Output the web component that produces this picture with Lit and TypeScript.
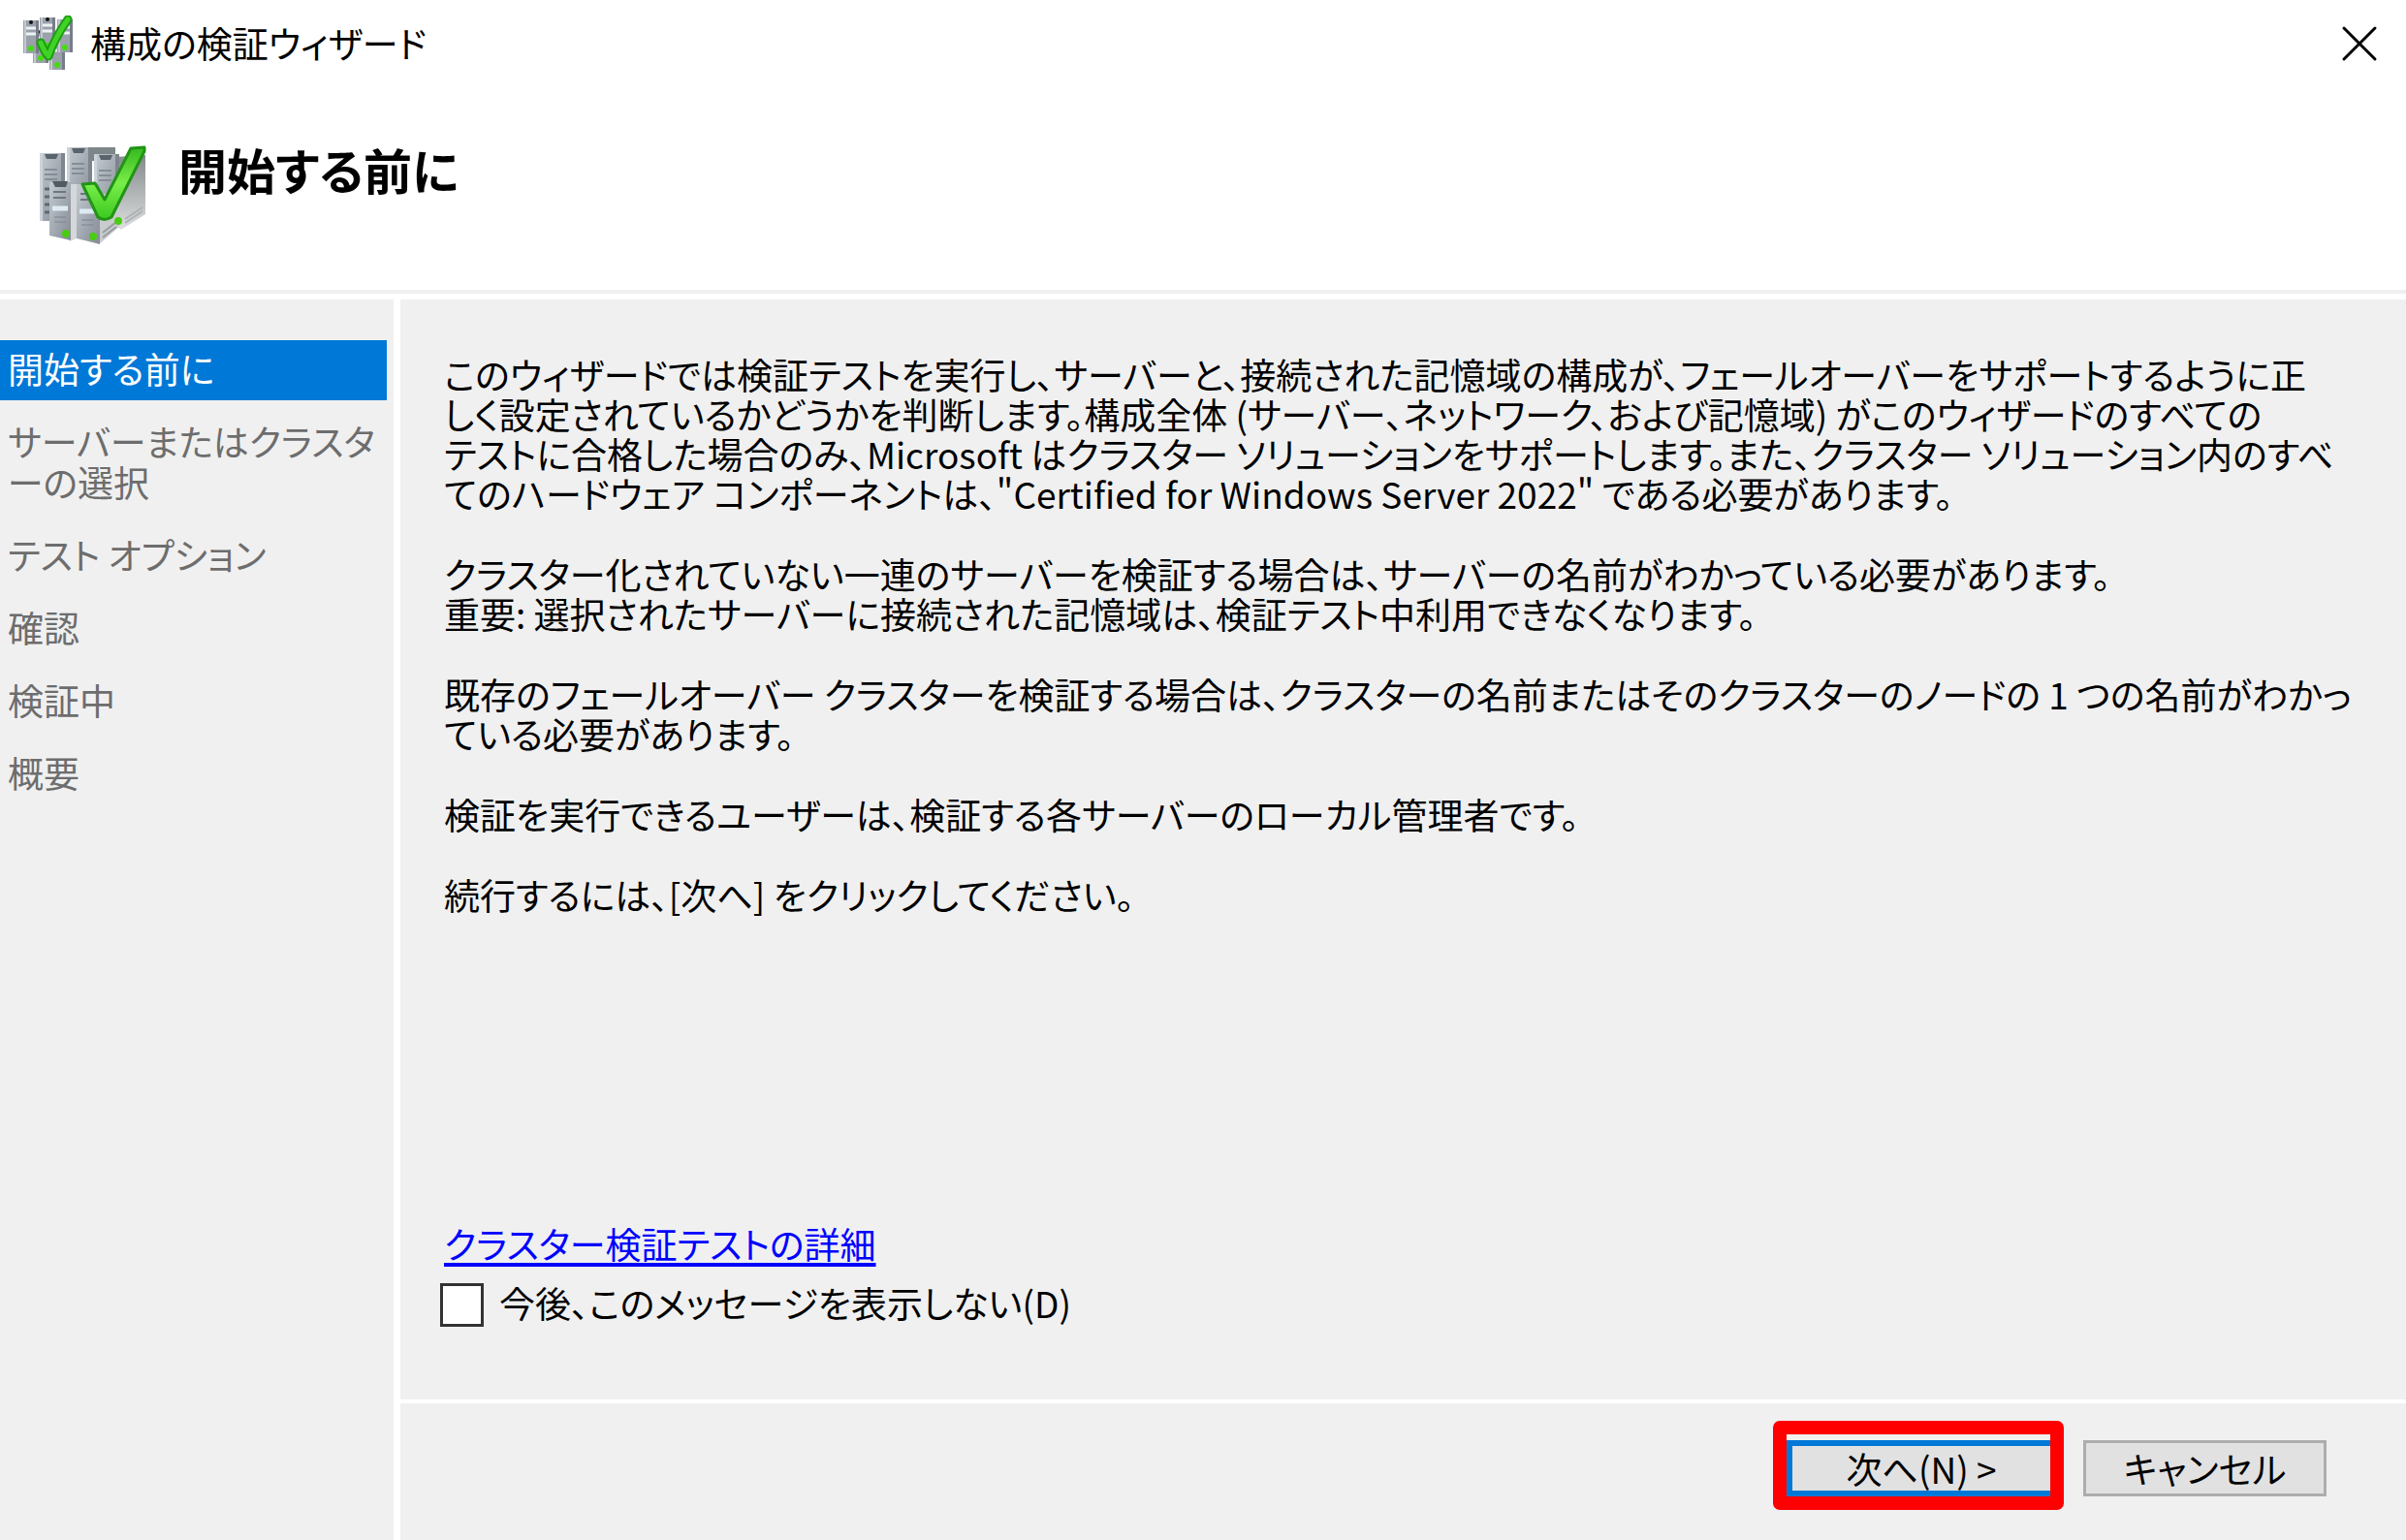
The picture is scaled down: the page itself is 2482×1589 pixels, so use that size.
import { LitElement, html, css, svg } from "lit";
import { customElement, state } from "lit/decorators.js";

interface Step {
  label: string;
}

const STEPS: Step[] = [
  { label: "開始する前に" },
  { label: "サーバーまたはクラスタ\nーの選択" },
  { label: "テスト オプション" },
  { label: "確認" },
  { label: "検証中" },
  { label: "概要" },
];

const PARAGRAPHS: string[] = [
  "このウィザードでは検証テストを実行し、サーバーと、接続された記憶域の構成が、フェールオーバーをサポートするように正\n" +
    "しく設定されているかどうかを判断します。構成全体 (サーバー、ネットワーク、および記憶域) がこのウィザードのすべての\n" +
    "テストに合格した場合のみ、Microsoft はクラスター ソリューションをサポートします。また、クラスター ソリューション内のすべ\n" +
    'てのハードウェア コンポーネントは、"Certified for Windows Server 2022" である必要があります。',
  "クラスター化されていない一連のサーバーを検証する場合は、サーバーの名前がわかっている必要があります。\n" +
    "重要: 選択されたサーバーに接続された記憶域は、検証テスト中利用できなくなります。",
  "既存のフェールオーバー クラスターを検証する場合は、クラスターの名前またはそのクラスターのノードの 1 つの名前がわかっ\n" +
    "ている必要があります。",
  "検証を実行できるユーザーは、検証する各サーバーのローカル管理者です。",
  "続行するには、[次へ] をクリックしてください。",
];

const tower = (x: number, y: number, h: number) => svg`
  <rect x=${x} y=${y} width="26" height=${h} rx="1" fill="url(#face)" />
  <rect x=${x} y=${y} width="3" height=${h} fill="#ccd3d9" />
  <rect x=${x + 22} y=${y} width="4" height=${h} fill="#7e858d" />
  <path d="M${x + 5} ${y + 1}h14l-2 5h-10z" fill="#59636b" />
  <path d="M${x + 5} ${y + 17}h13M${x + 5} ${y + 22}h13M${x + 5} ${y + 27}h13" stroke="#858d97" stroke-width="2" />
`;

@customElement("server-icon")
export class ServerIcon extends LitElement {
  static styles = css`
    :host {
      display: block;
    }
    svg {
      display: block;
      width: 100%;
      height: 100%;
    }
  `;

  render() {
    return html`
      <svg viewBox="0 0 112 104" aria-hidden="true">
        <defs>
          <linearGradient id="face" x1="0" y1="0" x2="1" y2="1">
            <stop offset="0" stop-color="#c4ccd2" />
            <stop offset="0.45" stop-color="#a6adb5" />
            <stop offset="1" stop-color="#858994" />
          </linearGradient>
          <linearGradient id="side" x1="0" y1="0" x2="0" y2="1">
            <stop offset="0" stop-color="#858a8c" />
            <stop offset="1" stop-color="#dcdedf" />
          </linearGradient>
          <linearGradient id="tick" x1="0" y1="0" x2="0" y2="1">
            <stop offset="0" stop-color="#35b81f" />
            <stop offset="0.5" stop-color="#79ee49" />
            <stop offset="1" stop-color="#3bc91f" />
          </linearGradient>
        </defs>
        <path d="M54 2h25v14h-25z" fill="#7d8688" />
        <path d="M79 12l31-2v61l-25 16-6-4z" fill="url(#side)" />
        <path d="M89 76l18-12M89 80l18-12" stroke="#aeb1b4" stroke-width="2" />
        ${tower(1, 8, 70)}
        <path d="M6 45h5M6 53h5M6 61h5M6 69h5" stroke="#5f6870" stroke-width="3" />
        ${tower(29, 2, 64)}
        ${tower(57, 9, 70)}
        <path d="M62 50l21 0v34l-21 18z" fill="#c9ccce" />
        <path d="M66 90l14-11M66 95l14-11" stroke="#989ca0" stroke-width="2" />
        <path d="M32 40h7v56l-7 3z" fill="#d5d8da" />
        <path d="M11 38h22v60l-22-5z" fill="url(#face)" />
        <path d="M14 37h16l-2 6h-11z" fill="#505a61" />
        <path d="M15 48h13M15 54h13" stroke="#6e7781" stroke-width="2" />
        <path d="M14 65h16" stroke="#dfebf2" stroke-width="5" />
        <path d="M16 74h12M16 79h12" stroke="#7c8490" stroke-width="1" />
        <path d="M39 40h24v62l-24-6z" fill="url(#face)" />
        <path d="M43 50h15M43 56h15" stroke="#6e7781" stroke-width="2" />
        <path d="M42 68h17" stroke="#dfebf2" stroke-width="5" />
        <path d="M44 77h13M44 82h13" stroke="#7c8490" stroke-width="1" />
        <circle cx="28" cy="91" r="4" fill="#48cd10" />
        <circle cx="56" cy="94" r="4" fill="#48cd10" />
        <circle cx="82" cy="78" r="4" fill="#48cd10" />
        <path
          d="M45 40l13-1 10 17 27-53 14-1v4l-34 68q-8 5-14 0z"
          fill="url(#tick)"
          stroke="#219416"
          stroke-width="3"
          stroke-linejoin="round"
        />
      </svg>
    `;
  }
}

@customElement("server-icon-small")
export class ServerIconSmall extends LitElement {
  static styles = css`
    :host {
      display: block;
    }
    svg {
      display: block;
      width: 100%;
      height: 100%;
    }
  `;

  private unit(x: number, y: number) {
    return svg`
      <rect x=${x} y=${y} width="16" height="34" fill="#9ba1ab" />
      <rect x=${x + 1} y=${y} width="2" height="34" fill="#c3c9d0" />
      <rect x=${x + 13} y=${y} width="3" height="34" fill="#777d88" />
      <circle cx=${x + 8} cy=${y + 2} r="2" fill="#111" />
      <path d="M${x + 3} ${y + 8}h10M${x + 3} ${y + 14}h10" stroke="#eef2f5" stroke-width="3" />
      <circle cx=${x + 8} cy=${y + 29} r="3" fill="#45dc0c" />
    `;
  }

  render() {
    return html`
      <svg viewBox="0 0 54 57" aria-hidden="true">
        ${this.unit(11, 15)} ${this.unit(28, 22)} ${this.unit(1, 5)} ${this.unit(18, 2)}
        ${this.unit(36, 4)}
        <path
          d="M19 28q4 10 8 14Q33 24 47 4"
          fill="none"
          stroke="#1d9c12"
          stroke-width="9"
          stroke-linecap="round"
          stroke-linejoin="round"
        />
        <path
          d="M19 28q4 10 8 14Q33 24 47 4"
          fill="none"
          stroke="#3fd326"
          stroke-width="5"
          stroke-linecap="round"
          stroke-linejoin="round"
        />
      </svg>
    `;
  }
}

@customElement("app-root")
export class AppRoot extends LitElement {
  static styles = css`
    :host {
      display: flex;
      flex-direction: column;
      min-height: 100vh;
      box-sizing: border-box;
      background: #fff;
      color: #000;
      font-family: "Noto Sans CJK JP", sans-serif;
      font-feature-settings: "palt";
      font-size: 37px;
      line-height: 41px;
    }
    *,
    *::after {
      box-sizing: border-box;
    }
    .titlebar {
      display: flex;
      align-items: center;
      gap: 16px;
      height: 88px;
      padding: 0 28px 0 23px;
    }
    .title-icon {
      width: 54px;
      height: 57px;
    }
    .title {
      flex: 1;
    }
    .close {
      display: grid;
      place-items: center;
      padding: 0;
      border: 0;
      background: none;
    }
    .close svg {
      display: block;
      width: 40px;
      height: 40px;
    }
    .header {
      display: flex;
      align-items: flex-start;
      gap: 32px;
      height: 215px;
      padding: 62px 40px 0;
      border-bottom: 4px solid #f0f0f0;
    }
    .header-icon {
      width: 112px;
      height: 104px;
    }
    .heading {
      margin: 0;
      font-size: 50px;
      line-height: 48px;
      font-weight: 700;
    }
    .body {
      flex: 1;
      display: grid;
      grid-template-columns: 406px 1fr;
      gap: 7px;
      padding-top: 6px;
    }
    .steps {
      display: flex;
      flex-direction: column;
      gap: 13px;
      margin: 0;
      padding: 42px 7px 0 0;
      background: #f0f0f0;
      list-style: none;
      color: #6d6d6d;
    }
    .step {
      padding: 8px 8px 12px;
      line-height: 42px;
      white-space: pre;
    }
    .step.current {
      background: #0078d7;
      color: #fff;
    }
    .page {
      display: flex;
      flex-direction: column;
      gap: 4px;
    }
    .content {
      flex: 1;
      display: flex;
      flex-direction: column;
      padding: 57px 45px 75px;
      background: #f0f0f0;
    }
    .text {
      display: flex;
      flex-direction: column;
      gap: 42px;
    }
    .text p {
      margin: 0;
      white-space: pre;
    }
    .options {
      display: flex;
      flex-direction: column;
      align-items: flex-start;
      gap: 20px;
      margin-top: auto;
    }
    a {
      color: #00f;
      text-decoration-thickness: 4px;
      text-underline-offset: 4px;
    }
    .check {
      display: flex;
      align-items: flex-start;
      gap: 16px;
      margin-left: -4px;
    }
    .check input {
      appearance: none;
      width: 45px;
      height: 45px;
      margin: 0;
      border: 3px solid #333;
      background: #fff;
    }
    .check input:checked {
      background: #0078d7;
    }
    .footer {
      display: flex;
      justify-content: flex-end;
      gap: 28px;
      padding: 38px 82px 45px;
      background: #f0f0f0;
    }
    .btn {
      width: 251px;
      height: 58px;
      padding: 0;
      border: 3px solid #adadad;
      background: #e1e1e1;
      color: #000;
      font: inherit;
      font-feature-settings: inherit;
    }
    .btn.primary {
      width: 278px;
      border: 6px solid #0078d7;
    }
    .marked {
      position: relative;
    }
    .marked::after {
      content: "";
      position: absolute;
      inset: -20px -8px -14px -14px;
      border: 14px solid #f00;
      border-radius: 7px;
      pointer-events: none;
    }
  `;

  @state() private current = 0;
  @state() private hideNextTime = false;

  private toggleHide(e: Event) {
    this.hideNextTime = (e.target as HTMLInputElement).checked;
  }

  render() {
    return html`
      <div class="titlebar" lang="ja">
        <server-icon-small class="title-icon"></server-icon-small>
        <span class="title">構成の検証ウィザード</span>
        <button class="close" type="button" aria-label="閉じる">
          <svg viewBox="0 0 40 40" aria-hidden="true">
            <path d="M4 5l32 32M36 5l-32 32" stroke="#000" stroke-width="3" stroke-linecap="round" />
          </svg>
        </button>
      </div>
      <header class="header" lang="ja">
        <server-icon class="header-icon"></server-icon>
        <h1 class="heading">開始する前に</h1>
      </header>
      <div class="body" lang="ja">
        <ol class="steps">
          ${STEPS.map(
            (s, i) => html`<li class="step ${i === this.current ? "current" : ""}">${s.label}</li>`
          )}
        </ol>
        <div class="page">
          <main class="content">
            <div class="text">${PARAGRAPHS.map((p) => html`<p>${p}</p>`)}</div>
            <div class="options">
              <a href="#details">クラスター検証テストの詳細</a>
              <label class="check">
                <input type="checkbox" .checked=${this.hideNextTime} @change=${this.toggleHide} />
                <span>今後、このメッセージを表示しない(D)</span>
              </label>
            </div>
          </main>
          <footer class="footer">
            <span class="marked"><button class="btn primary" type="button">次へ(N) &gt;</button></span>
            <button class="btn" type="button">キャンセル</button>
          </footer>
        </div>
      </div>
    `;
  }
}
